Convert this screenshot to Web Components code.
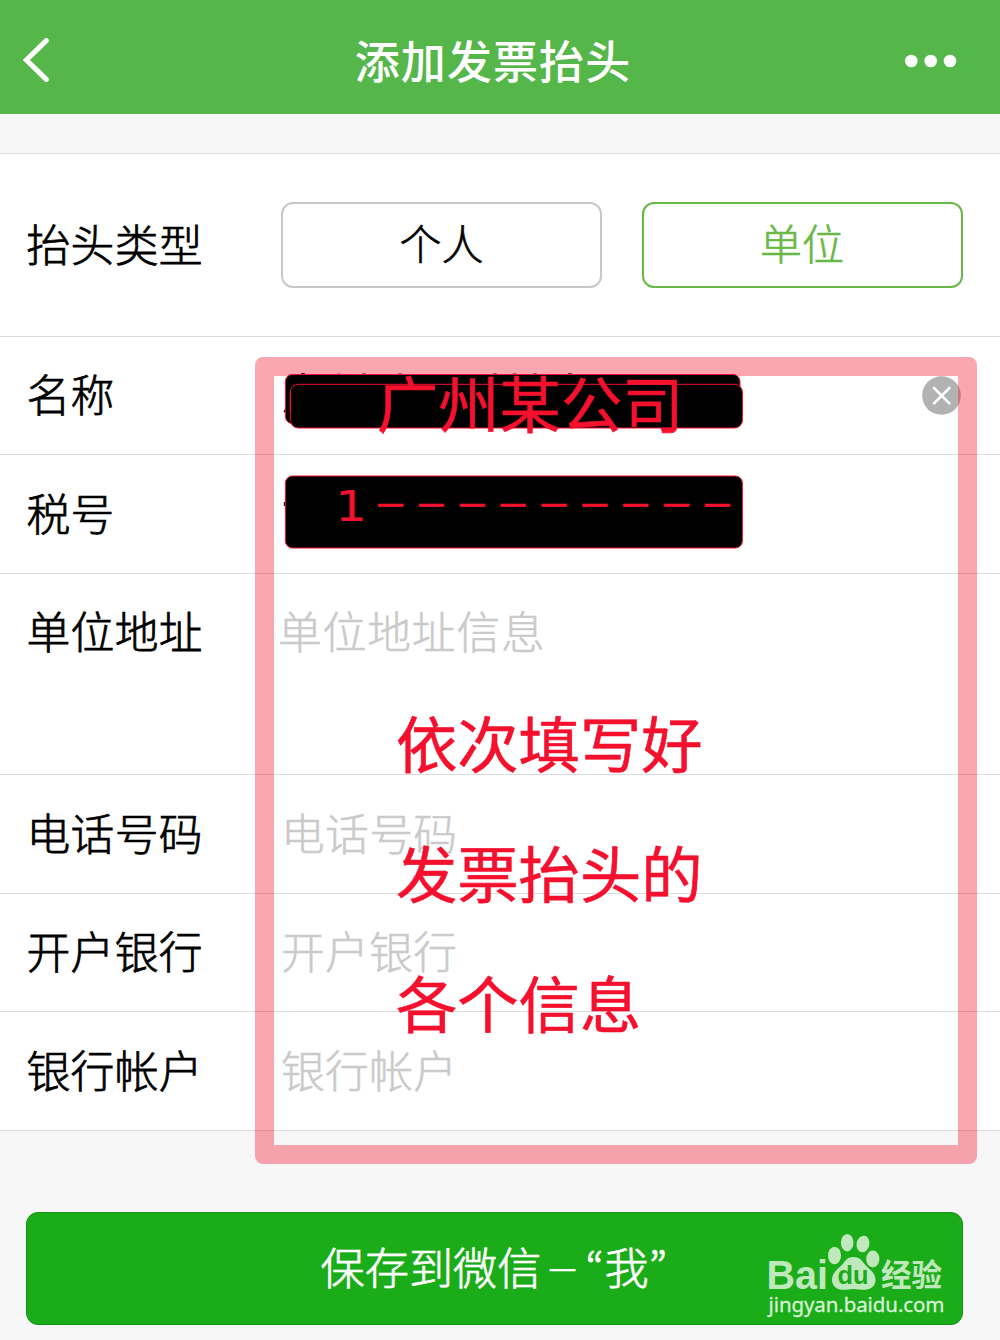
<!DOCTYPE html>
<html lang="zh-CN">
<head>
<meta charset="utf-8">
<title>添加发票抬头</title>
<style>
html,body{margin:0;padding:0}
body{width:1000px;height:1340px;overflow:hidden;background:#f7f7f7;font-family:"Noto Sans CJK SC",sans-serif;color:#000}
</style>
</head>
<body>
<invoice-page></invoice-page>
<script>
const define = (name, html) => {
  const t = document.createElement('template');
  t.innerHTML = html;
  customElements.define(name, class extends HTMLElement {
    constructor() {
      super();
      this.attachShadow({mode: 'open'}).appendChild(t.content.cloneNode(true));
    }
  });
};

define('nav-bar', `
<style>
:host{display:flex;height:114px;box-sizing:border-box;background:#55b64a;color:#fff;align-items:center;justify-content:space-between;padding:0 43px 0 23px}
svg{display:block}
.t{font-size:45px;font-weight:500;letter-spacing:1.1px;line-height:60px;padding-top:5px;margin-left:31px;white-space:nowrap}
.l{margin-top:6px}.r{margin-top:8px}
</style>
<svg class="l" width="27" height="44" viewBox="0 0 27 44"><path d="M23.3 2.6 3.4 22 23.3 41.4" fill="none" stroke="#fff" stroke-width="5" stroke-linecap="round" stroke-linejoin="miter"/></svg>
<div class="t"><slot></slot></div>
<svg class="r" width="52" height="14" viewBox="0 0 52 14"><g fill="#fbfdfb"><circle cx="6.3" cy="7" r="6.3"/><circle cx="25.7" cy="7" r="6.3"/><circle cx="45" cy="7" r="6.3"/></g></svg>
`);

define('form-row', `
<style>
:host{display:flex;box-sizing:border-box;height:118.5px;border-bottom:1.5px solid #dbdbdb;background:#fff;padding:24.5px 37.5px 0 26.5px;align-items:flex-start;font-size:43.8px;letter-spacing:.3px;line-height:64px;white-space:nowrap}
.l{width:254.5px;flex:none;font-weight:300;-webkit-text-stroke:.75px #000}
.f{flex:1;display:flex;justify-content:space-between;color:#cacaca;font-weight:300;-webkit-text-stroke:.5px #cacaca}
</style>
<div class="l"><slot name="label"></slot></div><div class="f"><slot></slot></div>
`);

define('type-option', `
<style>
:host{display:flex;box-sizing:border-box;width:321px;height:85.5px;border:2.5px solid #c8c8c8;border-radius:12px;justify-content:center;align-items:center;color:#000;font-size:42px;letter-spacing:0;line-height:60px;font-weight:300;-webkit-text-stroke:.6px #000;padding-bottom:6px}
:host([selected]){border-color:#69b845;color:#69b845;-webkit-text-stroke-color:#69b845}
</style>
<slot></slot>
`);

define('clear-icon', `
<style>:host{display:block;width:39px;height:39px;margin-top:14.5px;margin-right:1.5px}svg{display:block}</style>
<svg width="39" height="39" viewBox="0 0 39 39"><circle cx="19.5" cy="19.5" r="19.3" fill="#b2b2b2"/><path d="M12 12 27.4 27.4M27.4 12 12 27.4" stroke="#fff" stroke-width="2.6" stroke-linecap="round"/></svg>
`);

define('save-button', `
<style>
:host{display:flex;box-sizing:border-box;width:936.5px;height:113px;margin:81.7px 0 0 26px;border:1.5px solid #148f14;border-radius:12px;background:#1bac19;color:#fff;align-items:center;font-size:44.2px;line-height:64px;padding:0 0 3px 293.5px;font-weight:300;-webkit-text-stroke:.7px #fff}
</style>
<slot></slot>
`);

define('mark-frame', `
<style>:host{display:block;position:absolute;left:255px;top:357px;width:721.5px;height:806.5px;box-sizing:border-box;border:19px solid rgba(243,16,46,.37);border-radius:8px}</style>
`);

define('redaction-marks', `
<style>:host{display:block;position:absolute;left:280px;top:370px}svg{display:block}</style>
<svg width="470" height="182" viewBox="280 370 470 182">
<path d="M303 375v-2M339 375v-1.300M364 375v-1.500M400 375v-1.500M423 375v-1M477 375v-1M495 375v-1.500M514.500 375v-1.500M535 375v-1.500M570 375v-1.700M656 375v-1M669 375v-1" stroke="#400" stroke-width="3.500"/>
<path d="M286 406l-2.500 6 2.500 1zM286 502h-2.200v4h2.200z" fill="#111"/>
<g stroke="#f5102e" stroke-width="1">
<rect x="285.4" y="374.5" width="454.6" height="49" rx="7" fill="#000"/>
<rect x="290.3" y="384.3" width="452.2" height="43.7" rx="8" fill="#000"/>
<path d="M286 418.500 290.800 423 290.800 412H286z" fill="#000" stroke="none"/>
<path d="M290.300 421V392.300" fill="none"/>
<rect x="285.4" y="476" width="457" height="72" rx="7" fill="#000"/>
</g></svg>
`);

define('mark-text', `
<style>:host{display:block;position:absolute;color:#f5102e;font-size:61.3px;line-height:90px;font-weight:400;-webkit-text-stroke:.6px #f5102e;white-space:nowrap}</style>
<slot></slot>
`);

define('baidu-mark', `
<style>
:host{display:block;position:absolute;left:766px;top:1230px;width:182px;height:90px}
svg{display:block}
text{fill:#bfe8bd}
</style>
<svg width="182" height="90" viewBox="766 1230 182 90">
<text x="766.500" y="1288.800" font-family="Liberation Sans" font-weight="700" font-size="41" textLength="61.500" lengthAdjust="spacingAndGlyphs">Bai</text>
<g fill="#bfe8bd"><ellipse cx="834.5" cy="1255.5" rx="6.5" ry="8.7"/><ellipse cx="847.2" cy="1242.7" rx="6.3" ry="8.7"/><ellipse cx="863" cy="1244" rx="6.4" ry="8.4" transform="rotate(12 863 1244)"/><ellipse cx="872.8" cy="1259" rx="6.6" ry="8.4"/>
<path d="M853.5 1257c6 0 8 3 11 7 4 5 11 8 11 16 0 6-5 10-11 9.800-4-.1-7-.9-11-.9s-7 .9-11 .9c-6 0-10.500-4-10.500-10 0-8 7-11 11-16 3-4 4.500-6.800 10.500-6.800z"/></g>
<text x="837.500" y="1284.300" font-family="Liberation Sans" font-weight="700" font-size="25.500" textLength="31" lengthAdjust="spacingAndGlyphs" style="fill:#1bac19">du</text>
<text x="881" y="1286" font-family="Noto Sans CJK SC" font-weight="700" font-size="31" textLength="61" lengthAdjust="spacingAndGlyphs">经验</text>
<text x="768.500" y="1312" font-family="Noto Sans" font-size="20.500" textLength="176" lengthAdjust="spacing" style="fill:#d9f2d8;stroke:#d9f2d8;stroke-width:.3px">jingyan.baidu.com</text>
</svg>
`);

define('invoice-page', `
<style>
:host{display:block;position:relative;width:1000px;height:1340px;background:#f7f7f7}
.gap{box-sizing:border-box;height:40.300px;border-bottom:1.500px solid #dfdfdf}
.type{height:182.300px;padding-top:48px}
.type span{padding-top:9px;display:block}
.addr{height:201.500px}
.q{font-family:"Noto Sans CJK KR",sans-serif;display:inline-block;width:19px}
.d{font-size:34px;letter-spacing:0;margin:0 6px 0 4px;vertical-align:2px}
.n{margin-left:-3px;letter-spacing:.8px}
.one{display:inline-block;width:38.500px;font-family:"DejaVu Sans",sans-serif;font-size:42px;transform:translateY(3px) scaleX(1.200);transform-origin:0 0;-webkit-text-stroke:0}
.ds{font-size:34px;letter-spacing:6.850px}
</style>
<nav-bar>添加发票抬头</nav-bar>
<div class="gap"></div>
<form-row class="type"><span slot="label">抬头类型</span><type-option>个人</type-option><type-option selected>单位</type-option></form-row>
<form-row><span slot="label">名称</span><span></span><clear-icon></clear-icon></form-row>
<form-row><span slot="label">税号</span></form-row>
<form-row class="addr"><span slot="label">单位地址</span><span class="n">单位地址信息</span></form-row>
<form-row><span slot="label">电话号码</span><span>电话号码</span></form-row>
<form-row><span slot="label">开户银行</span><span>开户银行</span></form-row>
<form-row><span slot="label">银行帐户</span><span>银行帐户</span></form-row>
<save-button><span>保存到微信<span class="d">－</span><span class="q">“</span>我<span class="q">”</span></span></save-button>
<mark-frame></mark-frame>
<redaction-marks></redaction-marks>
<mark-text style="left:377px;top:357px">广州某公司</mark-text>
<mark-text style="left:335px;top:446.5px"><span class="one">1</span><span class="ds">－－－－－－－－－</span></mark-text>
<mark-text style="left:396px;top:697px">依次填写好</mark-text>
<mark-text style="left:396px;top:827px">发票抬头的</mark-text>
<mark-text style="left:396px;top:957px">各个信息</mark-text>
<baidu-mark></baidu-mark>
`);
</script>
</body>
</html>
